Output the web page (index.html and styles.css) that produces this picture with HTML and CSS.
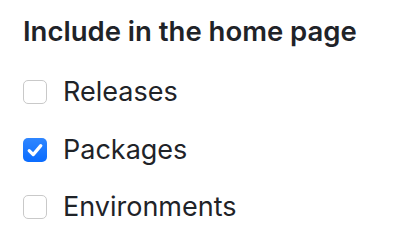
FILE: index.html
```html
<!DOCTYPE html>
<html>
<head>
<meta charset="utf-8">
<link rel="stylesheet" href="styles.css">
</head>
<body>
<div class="panel">
  <h2 class="title">Include in the home page</h2>
  <ul class="options">
    <li class="option"><span class="box"></span><span class="label">Releases</span></li>
    <li class="option"><span class="box checked"><svg viewBox="0 0 24 24" width="24" height="24"><path d="M6.2 12.6 L10.2 16.6 L17.8 7.6" fill="none" stroke="#fff" stroke-width="3.2" stroke-linecap="round" stroke-linejoin="round"/></svg></span><span class="label">Packages</span></li>
    <li class="option"><span class="box"></span><span class="label">Environments</span></li>
  </ul>
</div>
</body>
</html>
```
FILE: styles.css
```css
html, body {
  margin: 0;
  padding: 0;
  background: #ffffff;
}
body {
  font-family: Inter, "Noto Sans", sans-serif;
  color: #1f2328;
  width: 398px;
  height: 240px;
  overflow: hidden;
}
.panel {
  padding: 15px 23px 0 23px;
}
.title {
  margin: 0;
  font-size: 27.5px;
  font-weight: 600;
  line-height: 32px;
  letter-spacing: 0;
}
.options {
  list-style: none;
  margin: 29px 0 0 0;
  padding: 0;
  display: flex;
  flex-direction: column;
  gap: 25.5px;
}
.option {
  display: flex;
  align-items: center;
  gap: 16px;
  height: 32px;
}
.box {
  box-sizing: border-box;
  width: 24px;
  height: 24px;
  border: 1.5px solid #c9c9c9;
  border-radius: 5px;
  background: #fff;
  display: flex;
  align-items: center;
  justify-content: center;
  flex: none;
}
.box.checked {
  border: none;
  background: linear-gradient(#2f86ff, #0a6cff);
}
.box svg {
  display: block;
}
.label {
  font-size: 27px;
  line-height: 32px;
  font-weight: 400;
}
```
